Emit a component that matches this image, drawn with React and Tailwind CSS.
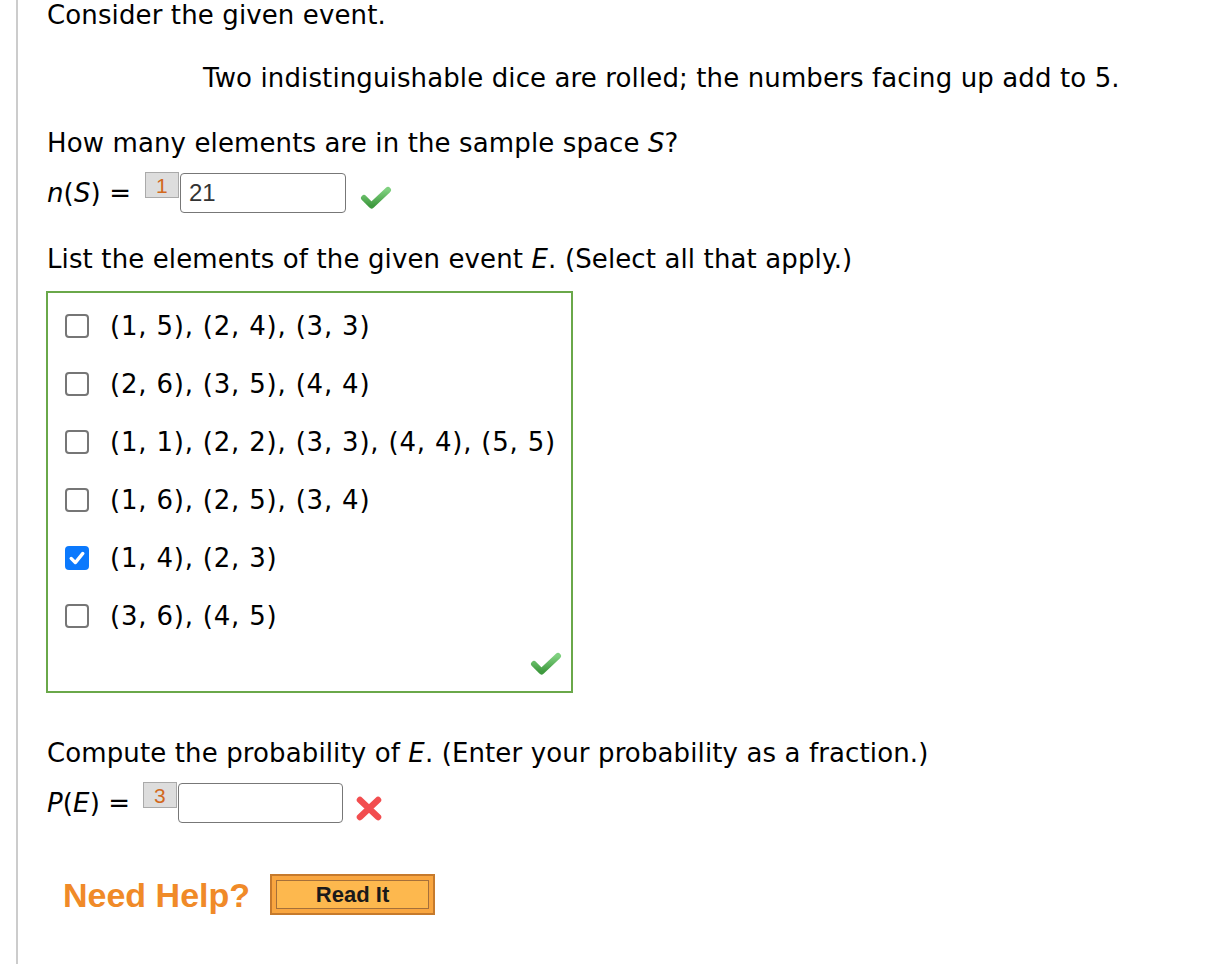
import React from "react";

const font = { fontFamily: '"DejaVu Sans", Verdana, sans-serif' };

function GreenCheck({ className }) {
  return (
    <svg className={className} viewBox="0 0 32 26" width="32" height="26">
      <defs>
        <linearGradient id="gc" x1="0" y1="0" x2="0" y2="1">
          <stop offset="0" stopColor="#7fd07f" />
          <stop offset="1" stopColor="#3f9a3f" />
        </linearGradient>
      </defs>
      <path d="M4 13 L11.5 20.5 L28 5" fill="none" stroke="url(#gc)" strokeWidth="6" strokeLinecap="round" strokeLinejoin="round" />
    </svg>
  );
}

function RedX({ className }) {
  return (
    <svg className={className} viewBox="0 0 28 27" width="28" height="27">
      <path d="M5 5 L23 22 M23 5 L5 22" fill="none" stroke="#f24d4f" strokeWidth="6.5" strokeLinecap="round" />
    </svg>
  );
}

function Box({ checked }) {
  if (checked) {
    return (
      <div className="w-[24px] h-[24px] rounded-[4px] bg-[#0b79fd] flex items-center justify-center shrink-0">
        <svg viewBox="0 0 24 24" width="20" height="20">
          <path d="M5 12.5 L10 17.5 L19 6.5" fill="none" stroke="#fff" strokeWidth="4" strokeLinecap="round" strokeLinejoin="round" />
        </svg>
      </div>
    );
  }
  return <div className="w-[24px] h-[24px] rounded-[4px] border-2 border-[#767676] bg-white shrink-0" />;
}

const options = [
  ["(1, 5), (2, 4), (3, 3)", false],
  ["(2, 6), (3, 5), (4, 4)", false],
  ["(1, 1), (2, 2), (3, 3), (4, 4), (5, 5)", false],
  ["(1, 6), (2, 5), (3, 4)", false],
  ["(1, 4), (2, 3)", true],
  ["(3, 6), (4, 5)", false],
];

function Label({ n }) {
  return (
    <div
      className="w-[34px] h-[26px] bg-[#dddddd] border border-[#aaaaaa] flex items-center justify-center text-[21px] leading-none text-[#d2691e] shrink-0"
      style={{ fontFamily: '"Liberation Sans", Arial, sans-serif' }}
    >
      {n}
    </div>
  );
}

export default function App() {
  return (
    <div className="flex min-h-[964px] bg-white text-black" style={font}>
      <div className="w-[16px] shrink-0" />
      <div className="w-[2px] shrink-0 bg-[#cccccc]" />
      <div className="pl-[29px] flex flex-col text-[26px] leading-[30px] tracking-[0.12px]">
        <div>Consider the given event.</div>
        <div className="mt-[33px] ml-[156px]">
          Two indistinguishable dice are rolled; the numbers facing up add to 5.
        </div>
        <div className="mt-[35px]">
          How many elements are in the sample space <i>S</i>?
        </div>
        <div className="mt-[14px] flex items-start">
          <div className="w-[98px] mt-[6px] shrink-0">
            <i>n</i>(<i>S</i>) =
          </div>
          <Label n="1" />
          <div
            className="ml-[1px] mt-[1px] w-[166px] h-[40px] border border-[#777777] rounded-[4px] pl-[8px] flex items-center text-[24px] tracking-normal text-[#333333]"
            style={{ fontFamily: '"Liberation Sans", Arial, sans-serif' }}
          >
            21
          </div>
          <GreenCheck className="ml-[14px] mt-[13px]" />
        </div>
        <div className="mt-[31px]">
          List the elements of the given event <i>E</i>. (Select all that apply.)
        </div>
        <div className="mt-[17px] -ml-[1px] w-[527px] h-[402px] border-2 border-[#6aa84a] pt-[4px] pl-[17px] pr-[9px] pb-[14px] flex flex-col">
          {options.map(([t, c]) => (
            <div key={t} className="h-[58px] flex items-center">
              <Box checked={c} />
              <span className="ml-[21px] tracking-[0.8px]">{t}</span>
            </div>
          ))}
          <div className="flex-1 flex items-end justify-end">
            <GreenCheck />
          </div>
        </div>
        <div className="mt-[45px]">
          Compute the probability of <i>E</i>. (Enter your probability as a fraction.)
        </div>
        <div className="mt-[14px] flex items-start">
          <div className="w-[96px] mt-[6px] shrink-0">
            <i>P</i>(<i>E</i>) =
          </div>
          <Label n="3" />
          <div className="ml-[1px] mt-[1px] w-[165px] h-[40px] border border-[#777777] rounded-[4px]" />
          <RedX className="ml-[12px] mt-[13px]" />
        </div>
        <div className="mt-[51px] flex items-center tracking-normal" style={{ fontFamily: '"Liberation Sans", Arial, sans-serif' }}>
          <span className="ml-[16px] text-[34px] leading-[40px] font-bold text-[#f08a28]">Need Help?</span>
          <div className="ml-[20px] w-[165px] h-[41px] border-2 border-[#c67a2c] bg-[#f9a640] p-[4px] flex">
            <div className="flex-1 border border-[#a5703a] bg-[#fdb84e] flex items-center justify-center text-[22px] font-bold text-[#1a1a1a]">
              Read It
            </div>
          </div>
        </div>
      </div>
    </div>
  );
}
